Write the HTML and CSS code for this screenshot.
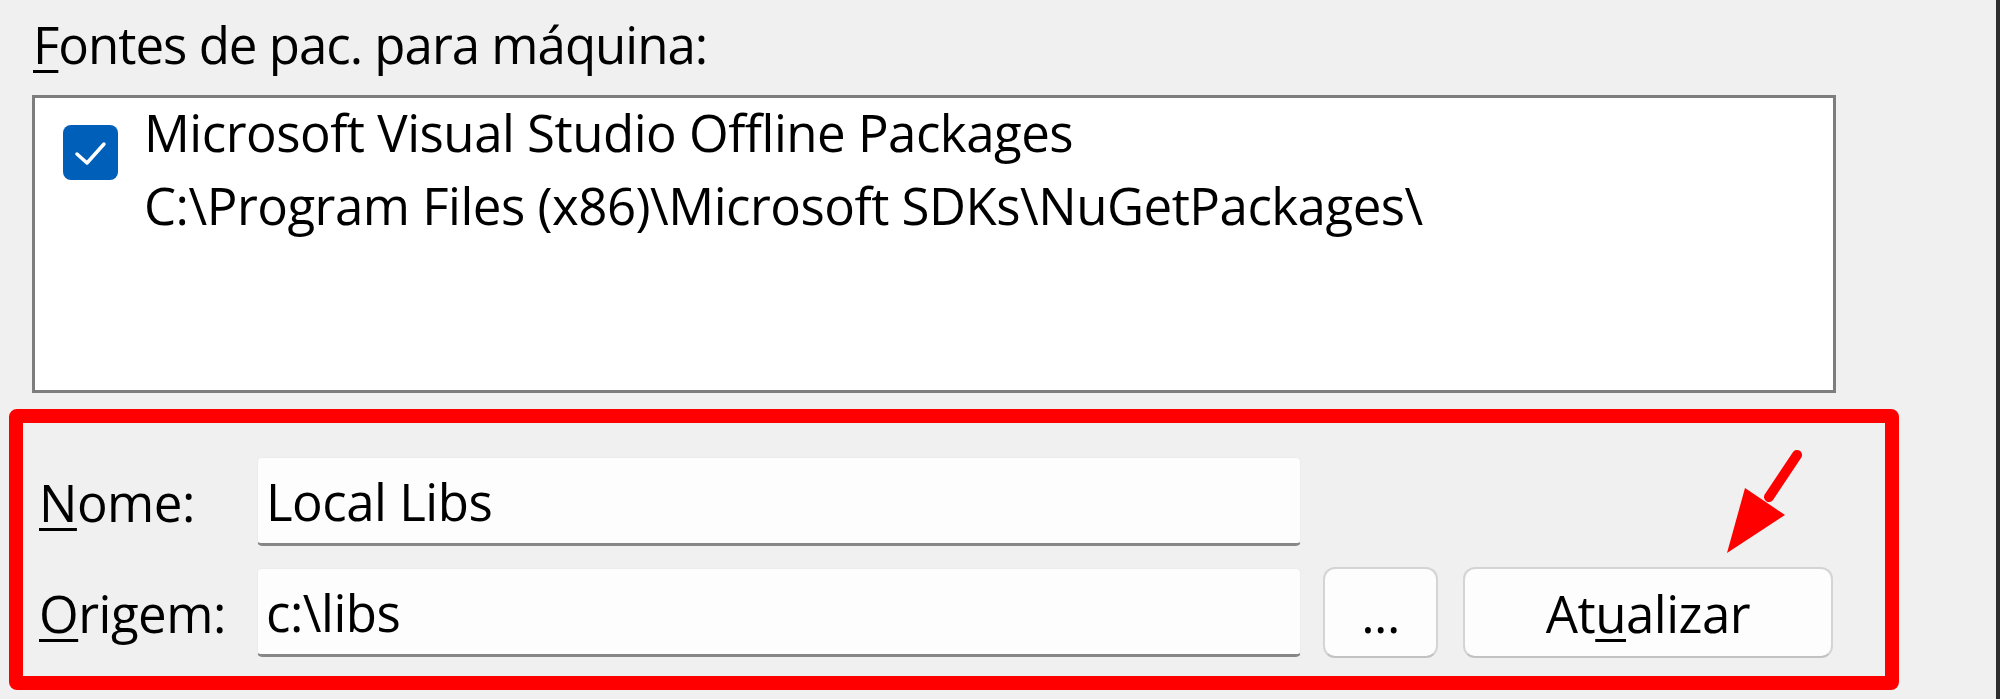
FILE: index.html
```html
<!DOCTYPE html>
<html lang="pt-BR">
<head>
  <meta charset="UTF-8">
  <meta name="viewport" content="width=device-width, initial-scale=1.0">
  <title>Fontes de pacote</title>
  <link rel="stylesheet" href="styles.css">
</head>
<body>
  <div class="screen">
    <div class="dialog">
      <div class="caption"><u>F</u>ontes de pac. para máquina:</div>

      <div class="listbox">
        <div class="source">
          <span class="check">
            <svg width="55" height="55" viewBox="0 0 55 55">
              <path d="M14 29 L24 38 L41 19" fill="none" stroke="#fff" stroke-width="3.5" stroke-linecap="round" stroke-linejoin="round"/>
            </svg>
          </span>
          <div class="source-text">
            <div>Microsoft Visual Studio Offline Packages</div>
            <div>C:\Program Files (x86)\Microsoft SDKs\NuGetPackages\</div>
          </div>
        </div>
      </div>

      <div class="editor">
        <div class="row">
          <label class="field-label"><u>N</u>ome:</label>
          <div class="field">Local Libs</div>
        </div>
        <div class="row">
          <label class="field-label"><u>O</u>rigem:</label>
          <div class="field">c:\libs</div>
          <button class="btn btn-browse">...</button>
          <button class="btn btn-update">At<u>u</u>alizar</button>
        </div>
        <!-- seta de destaque -->
        <svg class="arrow" width="100" height="120" viewBox="0 0 100 120">
          <line x1="84" y1="12" x2="56" y2="54" stroke="#ff0000" stroke-width="10" stroke-linecap="round"/>
          <polygon points="14,110 32,45 72,72" fill="#ff0000"/>
        </svg>
      </div>
    </div>
    <div class="edge"></div>
  </div>
</body>
</html>
```

FILE: styles.css
```css
body {
  margin: 0;
  background-color: #f0f0f0;
  font-family: "Open Sans", "Noto Sans", sans-serif;
  font-size: 51px;
  letter-spacing: -0.5px;
  color: #000;
}
.screen {
  display: flex;
  width: 2000px;
  height: 699px;
  overflow: hidden;
}
.dialog {
  flex: 1;
}
.edge {
  width: 4px;
  background-color: #2e2e2e;
}
u {
  text-decoration-thickness: 3px;
  text-underline-offset: 6px;
}
.caption {
  padding: 8px 0 0 33px;
  line-height: 73px;
  height: 73px;
  letter-spacing: -1px;
}
.listbox {
  box-sizing: border-box;
  margin: 14px 0 0 32px;
  width: 1804px;
  height: 298px;
  background-color: #fff;
  border: 3px solid #7d7d7d;
}
.source {
  display: flex;
  align-items: flex-start;
  gap: 26px;
  padding-left: 28px;
}
.check {
  display: block;
  width: 55px;
  height: 55px;
  margin-top: 27px;
  border-radius: 8px;
  background-color: #005fb8;
}
.check svg {
  display: block;
}
.source-text {
  line-height: 73px;
  margin-top: -2px;
}
.editor {
  position: relative;
  box-sizing: border-box;
  margin: 16px 0 0 9px;
  width: 1890px;
  height: 281px;
  border: 14px solid #ff0000;
  border-radius: 8px;
  padding: 34px 0 0 16px;
  display: flex;
  flex-direction: column;
  gap: 22px;
}
.row {
  display: flex;
  align-items: center;
  height: 89px;
}
.field-label {
  width: 218px;
}
.field {
  box-sizing: border-box;
  width: 1044px;
  height: 89px;
  padding-left: 8px;
  display: flex;
  align-items: center;
  background-color: #fdfdfd;
  border: 1px solid #ececec;
  border-bottom: 3px solid #878787;
  border-radius: 5px;
}
.btn {
  box-sizing: border-box;
  height: 91px;
  font-family: inherit;
  font-size: 51px;
  letter-spacing: -0.5px;
  color: #000;
  background-color: #fdfdfd;
  border: 2px solid #d4d4d4;
  border-bottom-color: #c2c2c2;
  border-radius: 12px;
  padding: 0;
}
.btn-browse {
  width: 115px;
  margin-left: 22px;
}
.btn-update {
  width: 370px;
  margin-left: 25px;
}
.arrow {
  position: absolute;
  left: 1690px;
  top: 20px;
}
```
